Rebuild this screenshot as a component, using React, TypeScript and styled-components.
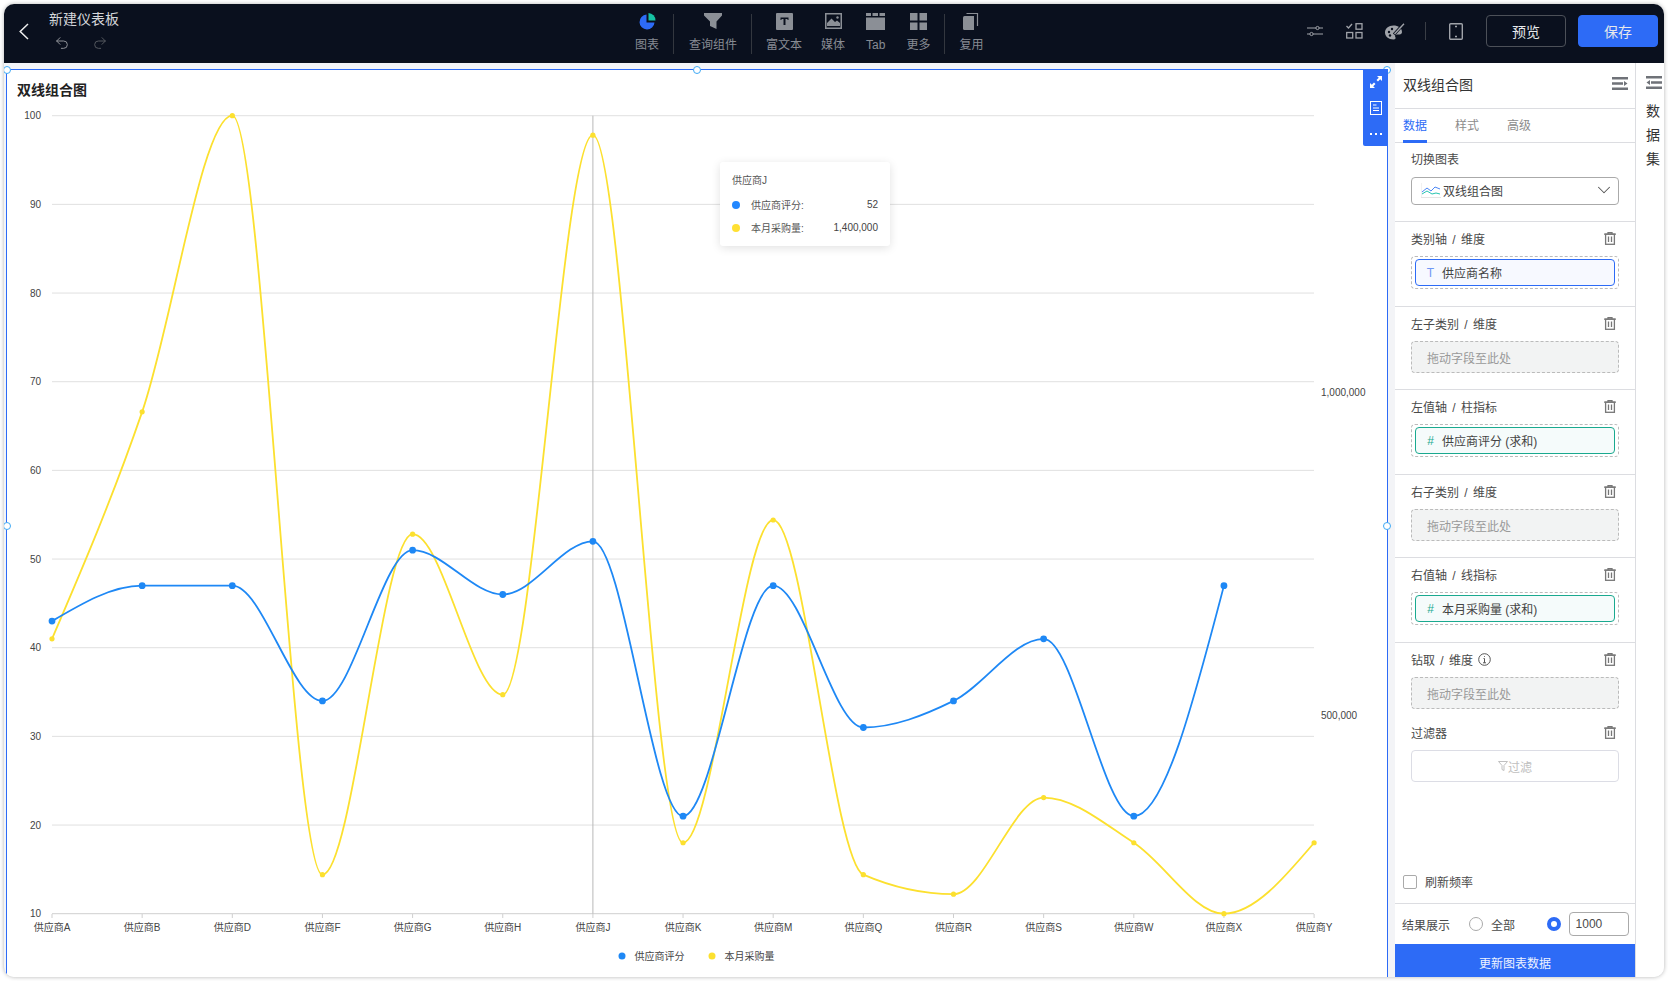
import React from 'react';
import styled, { createGlobalStyle } from 'styled-components';
import { Undo2, Redo2, ChevronDown } from 'lucide-react';

const BLUE = '#2d6bf6';
const SERIES_BLUE = '#1e88f5';
const SERIES_YELLOW = '#fce02f';

const GlobalStyle = createGlobalStyle`
  html, body {
    margin: 0;
    padding: 0;
    background: #fff;
    font-family: "Liberation Sans", "Noto Sans CJK SC", sans-serif;
    overflow: hidden;
  }
  * { box-sizing: border-box; }
`;

const Frame = styled.div`
  margin: 4px;
  width: 1660px;
  height: 973px;
  border-radius: 10px;
  overflow: hidden;
  display: flex;
  flex-direction: column;
  background: #f3f4f7;
  box-shadow: 0 0 4px rgba(0, 0, 0, 0.3);
`;

const TopBar = styled.header`
  flex-shrink: 0;
  height: 59px;
  display: flex;
  align-items: stretch;
  background: #0a101e;
`;

const TopLeft = styled.div`
  width: 631px;
  padding: 0 0 5px 15px;
  display: flex;
  align-items: center;
  gap: 20px;
`;

const TitleGroup = styled.div`
  display: flex;
  flex-direction: column;
  align-self: flex-start;
  padding-top: 5px;
`;

const BoardTitle = styled.div`
  font-size: 14px;
  line-height: 20px;
  color: #d4d6da;
`;

const HistoryRow = styled.div`
  display: flex;
  gap: 22px;
  margin-top: 6px;
  padding-left: 5px;
`;

const ToolGroup = styled.nav`
  display: flex;
  align-items: stretch;
  height: 100%;
`;

const Tool = styled.div<{ $gap?: number }>`
  display: flex;
  flex-direction: column;
  align-items: center;
  padding-top: 8px;
  margin-left: ${(p) => p.$gap ?? 0}px;
  font-size: 12px;
  line-height: 16px;
  color: #878b93;
  white-space: nowrap;
`;

const ToolIcon = styled.div`
  height: 18px;
  margin-bottom: 7px;
  display: flex;
  align-items: center;
`;

const ToolSep = styled.div`
  width: 1px;
  height: 40px;
  align-self: center;
  margin: 0 14px;
  background: #33373f;
`;

const TopRight = styled.div`
  margin-left: auto;
  padding: 0 6px 5px 0;
  display: flex;
  align-items: center;
`;

const TopIcon = styled.div<{ $left: number }>`
  margin-left: ${(p) => p.$left}px;
  display: flex;
  align-items: center;
`;

const BarSep = styled.div`
  width: 1px;
  height: 18px;
  margin-left: 20px;
  background: #3a3e46;
`;

const TopButton = styled.button<{ $primary?: boolean }>`
  width: 80px;
  height: 32px;
  margin-left: ${(p) => (p.$primary ? 12 : 23)}px;
  border-radius: 4px;
  border: 1px solid ${(p) => (p.$primary ? BLUE : '#4c5058')};
  background: ${(p) => (p.$primary ? BLUE : 'transparent')};
  color: #e6e8eb;
  font-family: inherit;
  font-size: 14px;
`;

const Body = styled.div`
  flex: 1;
  min-height: 0;
  display: flex;
`;

const Canvas = styled.main`
  flex: 1;
  min-width: 0;
  padding: 6px 7px 0 2px;
`;

const ChartCard = styled.section`
  position: relative;
  height: 100%;
  display: flex;
  flex-direction: column;
  background: #fff;
  border: 1px solid ${BLUE};
  border-bottom: none;
`;

const ChartTitle = styled.h2`
  flex-shrink: 0;
  height: 32px;
  margin: 0;
  padding: 10px 0 0 10px;
  font-size: 14px;
  line-height: 20px;
  font-weight: 700;
  color: #222;
`;

const ChartSvg = styled.svg`
  display: block;
  flex: 1;
  min-height: 0;
  width: 100%;
  overflow: visible;
  text {
    font-family: "Liberation Sans", "Noto Sans CJK SC", sans-serif;
    font-size: 10px;
    fill: #444;
  }
`;

const Handle = styled.span<{ $x: string; $y: string }>`
  position: absolute;
  left: ${(p) => p.$x};
  top: ${(p) => p.$y};
  width: 8px;
  height: 8px;
  margin: -4px 0 0 -4px;
  border-radius: 50%;
  background: #fff;
  border: 1px solid #3fa9f5;
`;

const CardTools = styled.div`
  position: absolute;
  top: -1px;
  right: -1px;
  width: 25px;
  height: 77px;
  padding-top: 7px;
  display: flex;
  flex-direction: column;
  align-items: center;
  gap: 13px;
  background: ${BLUE};
  border-radius: 0 0 0 2px;
  svg:last-child {
    margin-top: 5px;
  }
`;

const Tooltip = styled.div`
  position: absolute;
  left: 713px;
  top: 92px;
  width: 170px;
  height: 84px;
  padding: 10px 12px 0;
  background: #fff;
  border-radius: 3px;
  box-shadow: 0 2px 10px rgba(0, 0, 0, 0.12);
  font-size: 10px;
  color: #555;
`;

const TooltipTitle = styled.div`
  line-height: 18px;
`;

const TooltipRow = styled.div`
  display: flex;
  align-items: center;
  height: 23px;
  margin-top: 3px;
  & + & { margin-top: 0; }
`;

const TooltipDot = styled.i<{ $color: string }>`
  width: 8px;
  height: 8px;
  border-radius: 50%;
  margin-right: 11px;
  background: ${(p) => p.$color};
`;

const TooltipValue = styled.span`
  margin-left: auto;
  color: #444;
`;

const Panel = styled.aside`
  flex-shrink: 0;
  width: 241px;
  display: flex;
  flex-direction: column;
  background: #fff;
  border-right: 1px solid #dcdde1;
  color: #4a4a4a;
`;

const PanelHead = styled.div`
  height: 45px;
  padding: 0 7px 3px 8px;
  display: flex;
  align-items: center;
  justify-content: space-between;
  font-size: 14px;
  color: #333;
  svg {
    margin-top: -2px;
  }
`;

const Tabs = styled.div`
  height: 35px;
  padding: 0 8px;
  display: flex;
  gap: 28px;
  border-top: 1px solid #dcdde1;
  border-bottom: 1px solid #dcdde1;
`;

const TabItem = styled.div<{ $active?: boolean }>`
  font-size: 12px;
  line-height: 20px;
  padding-top: 7px;
  color: ${(p) => (p.$active ? BLUE : '#8b8b8b')};
  border-bottom: 3px solid ${(p) => (p.$active ? BLUE : 'transparent')};
  margin-bottom: -1px;
`;

const Section = styled.div<{ $top?: number; $bottom?: number; $bare?: boolean }>`
  padding: ${(p) => p.$top ?? 7}px 16px ${(p) => p.$bottom ?? 17}px;
  border-bottom: ${(p) => (p.$bare ? 'none' : '1px solid #dcdde1')};
`;

const SectionHead = styled.div<{ $gap?: number }>`
  height: 20px;
  padding-bottom: 2px;
  display: flex;
  align-items: center;
  justify-content: space-between;
  font-size: 12px;
  margin-bottom: ${(p) => p.$gap ?? 7}px;
`;

const HeadLabel = styled.span`
  display: flex;
  align-items: center;
  gap: 5px;
  word-spacing: 2px;
`;

const SelectBox = styled.div`
  height: 28px;
  padding: 0 3px 2px 9px;
  display: flex;
  align-items: center;
  gap: 2px;
  border: 1px solid #aaa;
  border-radius: 4px;
  font-size: 12px;
  color: #444;
`;

const SelectChevron = styled(ChevronDown)`
  margin-left: auto;
`;

const DropBox = styled.div`
  height: 33px;
  padding: 2px 3px;
  border: 1px dashed #bbb;
  border-radius: 4px;
`;

const FieldPill = styled.div<{ $kind: 'text' | 'num' }>`
  height: 27px;
  padding: 0 0 0 10px;
  display: flex;
  align-items: center;
  gap: 7px;
  font-size: 12px;
  color: #444;
  border-radius: 4px;
  border: 1px solid ${(p) => (p.$kind === 'text' ? BLUE : '#1aa98f')};
  background: ${(p) => (p.$kind === 'text' ? '#f7f9ff' : '#f5fbfb')};
`;

const FieldMark = styled.span<{ $kind: 'text' | 'num' }>`
  width: 9px;
  text-align: center;
  color: ${(p) => (p.$kind === 'text' ? '#6f97f5' : '#1aa98f')};
`;

const Placeholder = styled.div`
  height: 32px;
  margin-bottom: -1px;
  padding-left: 15px;
  display: flex;
  align-items: center;
  font-size: 12px;
  color: #999;
  background: #f2f3f3;
  border: 1px dashed #bbb;
  border-radius: 4px;
`;

const FilterBox = styled.div`
  height: 32px;
  display: flex;
  align-items: center;
  justify-content: center;
  font-size: 12px;
  color: #c0c0c0;
  border: 1px solid #dcdde5;
  border-radius: 4px;
`;

const Spacer = styled.div`
  flex: 1;
`;

const RefreshRow = styled.div`
  height: 40px;
  padding: 0 8px 4px;
  display: flex;
  align-items: center;
  gap: 8px;
  font-size: 12px;
  border-bottom: 1px solid #dcdde1;
`;

const CheckBox = styled.span`
  width: 14px;
  height: 14px;
  border: 1px solid #aaa;
  border-radius: 2px;
`;

const ResultRow = styled.div`
  height: 40px;
  padding: 0 6px 0 7px;
  display: flex;
  align-items: center;
  font-size: 12px;
`;

const Radio = styled.span<{ $on?: boolean; $left: number }>`
  width: 14px;
  height: 14px;
  margin: 0 8px 0 ${(p) => p.$left}px;
  border-radius: 50%;
  border: ${(p) => (p.$on ? `4.5px solid ${BLUE}` : '1px solid #aaa')};
  background: #fff;
`;

const CountInput = styled.div`
  width: 60px;
  height: 24px;
  margin-left: -0.5px;
  padding-left: 6px;
  line-height: 23px;
  font-size: 12px;
  border: 1px solid #aaa;
  border-radius: 4px;
`;

const UpdateButton = styled.button`
  height: 33px;
  padding: 3px 0 0;
  border: none;
  background: ${BLUE};
  color: #eef2ff;
  font-family: inherit;
  font-size: 12px;
`;

const SidePanel = styled.aside`
  flex-shrink: 0;
  width: 28px;
  padding: 13px 0 0 10px;
  background: #fff;
  font-size: 14px;
  color: #333;
`;

const SideWords = styled.div`
  margin-top: 7px;
  width: 14px;
  line-height: 24px;
`;

/* chart */
const X0 = 52;
const XSTEP = 90.15;
const yOf = (v: number) => 913.7 - ((v - 10) / 90) * 798;
const xOf = (i: number) => X0 + i * XSTEP;

const SUPPLIERS = ['A', 'B', 'D', 'F', 'G', 'H', 'J', 'K', 'M', 'Q', 'R', 'S', 'W', 'X', 'Y'];
const SCORE = [43, 47, 47, 34, 51, 46, 52, 21, 47, 31, 34, 41, 21, 47];
const PURCHASE = [41, 66.6, 100, 14.4, 52.8, 34.7, 97.8, 18, 54.4, 14.4, 12.2, 23.1, 18, 10, 18];
const TICKS = [100, 90, 80, 70, 60, 50, 40, 30, 20, 10];

const sign = (n: number) => (n < 0 ? -1 : 1);

// same maths as d3 curveMonotoneX
function monotonePath(pts: [number, number][]): string {
  const n = pts.length;
  const t: number[] = new Array(n).fill(0);
  for (let i = 1; i < n - 1; i++) {
    const h0 = pts[i][0] - pts[i - 1][0];
    const h1 = pts[i + 1][0] - pts[i][0];
    const s0 = (pts[i][1] - pts[i - 1][1]) / h0;
    const s1 = (pts[i + 1][1] - pts[i][1]) / h1;
    const p = (s0 * h1 + s1 * h0) / (h0 + h1);
    t[i] = (sign(s0) + sign(s1)) * Math.min(Math.abs(s0), Math.abs(s1), 0.5 * Math.abs(p)) || 0;
  }
  const slope = (a: [number, number], b: [number, number]) => (b[1] - a[1]) / (b[0] - a[0]);
  t[0] = (3 * slope(pts[0], pts[1]) - t[1]) / 2;
  t[n - 1] = (3 * slope(pts[n - 2], pts[n - 1]) - t[n - 2]) / 2;
  let d = `M${pts[0][0]},${pts[0][1]}`;
  for (let i = 0; i < n - 1; i++) {
    const dx = (pts[i + 1][0] - pts[i][0]) / 3;
    d += `C${pts[i][0] + dx},${pts[i][1] + dx * t[i]} ${pts[i + 1][0] - dx},${pts[i + 1][1] - dx * t[i + 1]} ${pts[i + 1][0]},${pts[i + 1][1]}`;
  }
  return d;
}

const toPoints = (vals: number[]) => vals.map((v, i) => [xOf(i), yOf(v)] as [number, number]);

function LineChart() {
  const score = toPoints(SCORE);
  const purchase = toPoints(PURCHASE);
  return (
    <ChartSvg viewBox="7 102 1380 875" preserveAspectRatio="xMinYMin meet">
      {TICKS.map((t) => (
        <g key={t}>
          <line x1={X0} x2={1314} y1={yOf(t)} y2={yOf(t)} stroke={t === 10 ? '#cfcfcf' : '#e0e0e0'} strokeWidth={1} />
          <text x={41} y={yOf(t) + 3.5} textAnchor="end">{t}</text>
        </g>
      ))}
      {SUPPLIERS.map((s, i) => (
        <g key={s}>
          <line x1={xOf(i)} x2={xOf(i)} y1={914} y2={918} stroke="#cfcfcf" />
          <text x={xOf(i)} y={930.5} textAnchor="middle">{`供应商${s}`}</text>
        </g>
      ))}
      <text x={1321} y={396}>1,000,000</text>
      <text x={1321} y={718.5}>500,000</text>
      <line x1={xOf(6)} x2={xOf(6)} y1={115.7} y2={913.7} stroke="#b8b8b8" />
      <path d={monotonePath(purchase)} fill="none" stroke={SERIES_YELLOW} strokeWidth={1.8} />
      <path d={monotonePath(score)} fill="none" stroke={SERIES_BLUE} strokeWidth={1.8} />
      {purchase.map(([x, y]) => (
        <circle key={x} cx={x} cy={y} r={2.6} fill={SERIES_YELLOW} />
      ))}
      {score.map(([x, y]) => (
        <circle key={x} cx={x} cy={y} r={3.4} fill={SERIES_BLUE} />
      ))}
      <circle cx={622} cy={956} r={3.5} fill={SERIES_BLUE} />
      <text x={634.5} y={960}>供应商评分</text>
      <circle cx={712} cy={956} r={3.5} fill={SERIES_YELLOW} />
      <text x={724.5} y={960}>本月采购量</text>
    </ChartSvg>
  );
}

/* icons */
const GREY = '#8b8f96';

const PieIcon = () => (
  <svg width="17" height="17" viewBox="0 0 17 17">
    <path d="M7.5 1.5A7.5 7.5 0 1 0 15.5 9.5H7.5Z" fill="#2d6bf6" />
    <path d="M9.5 0A7.5 7.5 0 0 1 16.5 7.5H9.5Z" fill="#16c2a3" />
  </svg>
);
const FunnelIcon = () => (
  <svg width="18" height="18" viewBox="0 0 18 18">
    <path d="M0 1H18V3.5L12.5 9.5V17L6 14V9.5L0 3.5Z" fill={GREY} />
  </svg>
);
const RichTextIcon = () => (
  <svg width="17" height="17" viewBox="0 0 17 17">
    <rect width="17" height="17" rx="1" fill={GREY} />
    <path d="M4.5 4.5H12.5V7H11.5V6H9.5V12H7.5V6H5.5V7H4.5Z" fill="#0a101e" />
  </svg>
);
const MediaIcon = () => (
  <svg width="17" height="16" viewBox="0 0 17 16">
    <rect x=".75" y=".75" width="15.5" height="14.5" fill="none" stroke={GREY} strokeWidth="1.5" />
    <path d="M2 10L6.5 5.5L10 9L12 7.5L15 10V13H2Z" fill={GREY} />
    <circle cx="12.5" cy="4.5" r="1.2" fill={GREY} />
  </svg>
);
const TabIcon = () => (
  <svg width="19" height="17" viewBox="0 0 19 17">
    <path d="M0 0H5V3H0ZM6.5 0H12V3H6.5ZM13.5 0H19V3H13.5Z" fill={GREY} />
    <path d="M0 4.5H19V17H0Z" fill={GREY} />
  </svg>
);
const GridIcon = () => (
  <svg width="17" height="17" viewBox="0 0 17 17">
    <path d="M0 0H7.5V7.5H0ZM9.5 0H17V7.5H9.5ZM0 9.5H7.5V17H0ZM9.5 9.5H17V17H9.5Z" fill={GREY} />
  </svg>
);
const CopyIcon = () => (
  <svg width="16" height="18" viewBox="0 0 16 18">
    <path d="M0 5.5Q0 4 1.5 4H11V18H1.5Q0 18 0 16.5Z" fill={GREY} />
    <path d="M3.5 1.5H14.5V14" fill="none" stroke={GREY} strokeWidth="1.2" />
  </svg>
);
const SlidersIcon = () => (
  <svg width="16" height="14" viewBox="0 0 16 14" fill="none" stroke="#a0a3a9" strokeWidth="1">
    <path d="M0 4H9M12 4H16M0 10H3M6 10H16" />
    <circle cx="10.5" cy="4" r="1.6" />
    <circle cx="4.5" cy="10" r="1.6" />
  </svg>
);
const LayoutCheckIcon = () => (
  <svg width="17" height="16" viewBox="0 0 17 16" fill="none" stroke="#a0a3a9" strokeWidth="1.3">
    <path d="M.5 3L2.5 5L6 1" />
    <rect x="10" y=".7" width="6" height="5.5" />
    <rect x=".7" y="9.5" width="6" height="5.5" />
    <rect x="10" y="9.5" width="6" height="5.5" />
  </svg>
);
const PaletteIcon = () => (
  <svg width="20" height="17" viewBox="0 0 20 17">
    <path
      d="M8.5 2.5C3.5 2.5 0 5.5 0 9.5S3.5 16.5 8.5 16.5C10.5 16.5 11 15 10.3 14C9.5 12.8 10.3 11.5 12 11.5H14.5C16 11.5 17 10.5 17 9C17 5 13 2.5 8.5 2.5Z"
      fill="#a0a3a9"
    />
    <circle cx="4" cy="9" r="1.2" fill="#0a101e" />
    <circle cx="7" cy="6" r="1.2" fill="#0a101e" />
    <circle cx="5" cy="12.5" r="1.2" fill="#0a101e" />
    <path d="M9 11.5L18.5 1" stroke="#0a101e" strokeWidth="3" />
    <path d="M9.5 11L19 .7" stroke="#a0a3a9" strokeWidth="1.4" />
  </svg>
);
const PhoneIcon = () => (
  <svg width="14" height="17" viewBox="0 0 14 17" fill="none" stroke="#a0a3a9" strokeWidth="1.4">
    <rect x=".7" y=".7" width="12.6" height="15.6" rx="1" />
    <path d="M6 3.5H8M6 13.5H8" />
  </svg>
);
const CollapseSvg = styled.svg<{ $flip?: boolean }>`
  transform: ${(p) => (p.$flip ? 'scaleX(-1)' : 'none')};
`;
const CollapseIcon = ({ flip }: { flip?: boolean }) => (
  <CollapseSvg $flip={flip} width="16" height="13" viewBox="0 0 16 13">
    <path d="M0 0H16V2.5H0ZM0 5.25H11V7.75H0ZM0 10.5H16V13H0Z" fill="#6f7278" />
    <path d="M12 4L15.5 6.5L12 9Z" fill="#6f7278" />
  </CollapseSvg>
);
const TrashSvg = styled.svg`
  margin-right: 3px;
`;
const TrashIcon = () => (
  <TrashSvg width="12" height="13" viewBox="0 0 12 13" fill="none" stroke="#777" strokeWidth="1.3">
    <path d="M0 2.2H12M4 2.2V.7H8V2.2" />
    <rect x="1.6" y="2.2" width="8.8" height="10.1" />
    <path d="M4.5 4.5V10M7.5 4.5V10" />
  </TrashSvg>
);
const InfoIcon = () => (
  <svg width="13" height="13" viewBox="0 0 13 13" fill="none" stroke="#555">
    <circle cx="6.5" cy="6.5" r="5.8" />
    <path d="M6.5 3V3.8M5.5 5.5H6.5V9.8M5 9.8H8" />
  </svg>
);
const ComboThumb = () => (
  <svg width="20" height="15" viewBox="0 0 20 15" fill="none">
    <path d="M0 0V14.5H20" stroke="#e4e4e4" />
    <path d="M1 9L6 5L10 8L14 4L19 6" stroke="#4b86f5" />
    <path d="M1 11L6 8L11 11L15 10L19 11" stroke="#26c4b0" />
  </svg>
);
const ExpandIcon = () => (
  <svg width="12" height="12" viewBox="0 0 12 12" fill="#fff">
    <path d="M7 0H12V5L10.2 3.2L8 5.5L6.5 4L8.8 1.8ZM5 12H0V7L1.8 8.8L4 6.5L5.5 8L3.2 10.2Z" />
  </svg>
);
const NoteIcon = () => (
  <svg width="12" height="14" viewBox="0 0 12 14" fill="none" stroke="#fff">
    <rect x=".5" y=".5" width="11" height="13" />
    <path d="M3 4H6.5M3 7H9M3 9.5H9" />
  </svg>
);
const DotsIcon = () => (
  <svg width="12" height="2" viewBox="0 0 12 2" fill="#fff">
    <path d="M0 0H2V2H0ZM5 0H7V2H5ZM10 0H12V2H10Z" />
  </svg>
);
const BackIcon = () => (
  <svg width="10" height="17" viewBox="0 0 10 17" fill="none" stroke="#eee" strokeWidth="1.5">
    <path d="M9 1L1.2 8.5L9 16" />
  </svg>
);
const SmallFunnel = () => (
  <svg width="10" height="10" viewBox="0 0 10 10" fill="none" stroke="#c0c0c0">
    <path d="M.5 .5H9.5L6 4.5V9.5L4 8.5V4.5Z" />
  </svg>
);

type DropSection = { label: string; field?: string; kind?: 'text' | 'num'; info?: boolean };

const SECTIONS: DropSection[] = [
  { label: '类别轴 / 维度', field: '供应商名称', kind: 'text' },
  { label: '左子类别 / 维度' },
  { label: '左值轴 / 柱指标', field: '供应商评分 (求和)', kind: 'num' },
  { label: '右子类别 / 维度' },
  { label: '右值轴 / 线指标', field: '本月采购量 (求和)', kind: 'num' },
];

function FieldSection({ label, field, kind, info, bare }: DropSection & { bare?: boolean }) {
  return (
    <Section $bare={bare} $bottom={bare ? 15 : undefined}>
      <SectionHead>
        <HeadLabel>
          {label}
          {info && <InfoIcon />}
        </HeadLabel>
        <TrashIcon />
      </SectionHead>
      {field && kind ? (
        <DropBox>
          <FieldPill $kind={kind}>
            <FieldMark $kind={kind}>{kind === 'text' ? 'T' : '#'}</FieldMark>
            {field}
          </FieldPill>
        </DropBox>
      ) : (
        <Placeholder>拖动字段至此处</Placeholder>
      )}
    </Section>
  );
}

export default function App() {
  return (
    <>
      <GlobalStyle />
      <Frame>
        <TopBar>
          <TopLeft>
            <BackIcon />
            <TitleGroup>
              <BoardTitle>新建仪表板</BoardTitle>
              <HistoryRow>
                <Undo2 size={16} color="#8f9298" strokeWidth={1.5} />
                <Redo2 size={16} color="#55585f" strokeWidth={1.5} />
              </HistoryRow>
            </TitleGroup>
          </TopLeft>
          <ToolGroup>
            <Tool><ToolIcon><PieIcon /></ToolIcon>图表</Tool>
            <ToolSep />
            <Tool $gap={1}><ToolIcon><FunnelIcon /></ToolIcon>查询组件</Tool>
            <ToolSep />
            <Tool><ToolIcon><RichTextIcon /></ToolIcon>富文本</Tool>
            <Tool $gap={19}><ToolIcon><MediaIcon /></ToolIcon>媒体</Tool>
            <Tool $gap={21}><ToolIcon><TabIcon /></ToolIcon>Tab</Tool>
            <Tool $gap={21}><ToolIcon><GridIcon /></ToolIcon>更多</Tool>
            <ToolSep />
            <Tool><ToolIcon><CopyIcon /></ToolIcon>复用</Tool>
          </ToolGroup>
          <TopRight>
            <TopIcon $left={0}><SlidersIcon /></TopIcon>
            <TopIcon $left={23}><LayoutCheckIcon /></TopIcon>
            <TopIcon $left={22}><PaletteIcon /></TopIcon>
            <BarSep />
            <TopIcon $left={23}><PhoneIcon /></TopIcon>
            <TopButton>预览</TopButton>
            <TopButton $primary>保存</TopButton>
          </TopRight>
        </TopBar>
        <Body>
          <Canvas>
            <ChartCard>
              <ChartTitle>双线组合图</ChartTitle>
              <LineChart />
              <Handle $x="0" $y="0" />
              <Handle $x="50%" $y="0" />
              <Handle $x="100%" $y="0" />
              <Handle $x="0" $y="456px" />
              <Handle $x="100%" $y="456px" />
              <CardTools>
                <ExpandIcon />
                <NoteIcon />
                <DotsIcon />
              </CardTools>
              <Tooltip>
                <TooltipTitle>供应商J</TooltipTitle>
                <TooltipRow>
                  <TooltipDot $color="#2388ff" />
                  供应商评分:
                  <TooltipValue>52</TooltipValue>
                </TooltipRow>
                <TooltipRow>
                  <TooltipDot $color="#ffe033" />
                  本月采购量:
                  <TooltipValue>1,400,000</TooltipValue>
                </TooltipRow>
              </Tooltip>
            </ChartCard>
          </Canvas>
          <Panel>
            <PanelHead>
              双线组合图
              <CollapseIcon />
            </PanelHead>
            <Tabs>
              <TabItem $active>数据</TabItem>
              <TabItem>样式</TabItem>
              <TabItem>高级</TabItem>
            </Tabs>
            <Section $top={6} $bottom={16}>
              <SectionHead $gap={8}>切换图表</SectionHead>
              <SelectBox>
                <ComboThumb />
                双线组合图
                <SelectChevron size={22} color="#555" strokeWidth={1.1} />
              </SelectBox>
            </Section>
            {SECTIONS.map((s) => (
              <FieldSection key={s.label} {...s} />
            ))}
            <FieldSection label="钻取 / 维度" info bare />
            <Section $top={0} $bare>
              <SectionHead>
                过滤器
                <TrashIcon />
              </SectionHead>
              <FilterBox>
                <SmallFunnel />
                过滤
              </FilterBox>
            </Section>
            <Spacer />
            <RefreshRow>
              <CheckBox />
              刷新频率
            </RefreshRow>
            <ResultRow>
              结果展示
              <Radio $left={19} />
              全部
              <Radio $on $left={32} />
              <CountInput>1000</CountInput>
            </ResultRow>
            <UpdateButton>更新图表数据</UpdateButton>
          </Panel>
          <SidePanel>
            <CollapseIcon flip />
            <SideWords>数据集</SideWords>
          </SidePanel>
        </Body>
      </Frame>
    </>
  );
}
